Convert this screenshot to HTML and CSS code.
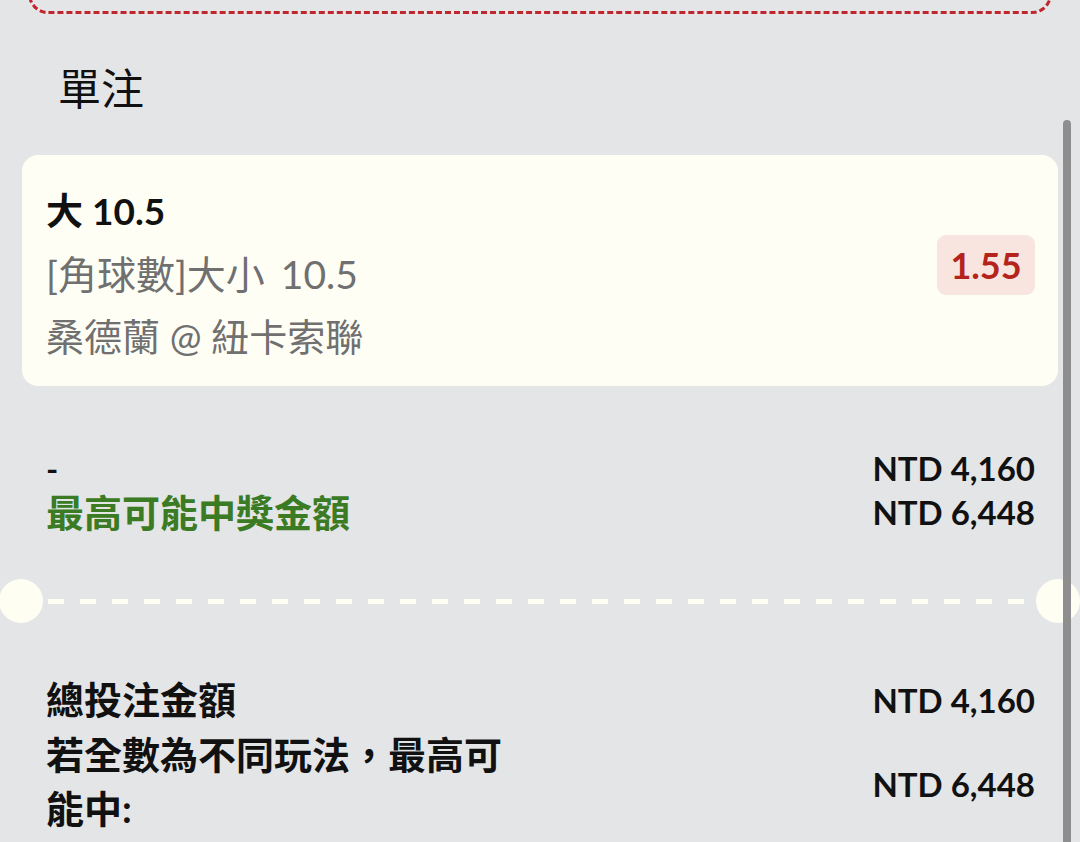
FILE: index.html
```html
<!DOCTYPE html>
<html lang="zh-Hant">
<head>
<meta charset="utf-8">
<title>單注</title>
<link rel="stylesheet" href="styles.css">
</head>
<body>
<div class="page">
  <div class="prev-box"></div>
  <div class="section-title">單注</div>

  <div class="bet-card">
    <div class="bet-info">
      <div class="bet-pick">大 10.5</div>
      <div class="bet-market">[角球數]大小 10.5</div>
      <div class="bet-match">桑德蘭 @ 紐卡索聯</div>
    </div>
    <div class="odds-badge">1.55</div>
  </div>

  <div class="summary">
    <div class="summary-left">
      <div class="line">-</div>
      <div class="line green">最高可能中獎金額</div>
    </div>
    <div class="summary-right">
      <div class="line">NTD 4,160</div>
      <div class="line">NTD 6,448</div>
    </div>
  </div>

  <div class="divider">
    <span class="notch"></span>
    <span class="dashes"></span>
    <span class="notch"></span>
  </div>

  <div class="totals">
    <div class="total-row">
      <div class="total-label">總投注金額</div>
      <div class="total-value">NTD 4,160</div>
    </div>
    <div class="total-row total-row-wrap">
      <div class="total-label">若全數為不同玩法，最高可能中:</div>
      <div class="total-value">NTD 6,448</div>
    </div>
  </div>

  <div class="scrollbar"></div>
</div>
</body>
</html>
```

FILE: styles.css
```css
html, body {
  margin: 0;
  padding: 0;
  background: #e4e5e7;
}

.page {
  position: relative;
  width: 1080px;
  height: 842px;
  overflow: hidden;
  font-family: "Lato", "Noto Sans CJK TC", sans-serif;
  color: #111;
}

.prev-box {
  margin: -42px 28px 0;
  height: 50px;
  border: 3px dashed #c0262d;
  border-radius: 20px;
}

.section-title {
  margin: 46px 0 0 58px;
  height: 58px;
  line-height: 58px;
  font-size: 43px;
  font-weight: 400;
  color: #111;
}

.bet-card {
  margin: 37px 22px 0;
  background: #fffef5;
  border-radius: 16px;
  padding: 26px 23px 19px 24px;
  display: flex;
  align-items: center;
  justify-content: space-between;
}

.bet-info {
  display: flex;
  flex-direction: column;
}

.bet-pick {
  font-size: 37px;
  font-weight: 700;
  line-height: 60px;
  margin-top: 0;
  margin-bottom: 2px;
  color: #111;
}

.bet-market,
.bet-match {
  font-size: 38px;
  font-weight: 400;
  line-height: 62px;
  color: #707070;
}

.bet-market {
  font-size: 39px;
  word-spacing: 6px;
}

.odds-badge {
  width: 98px;
  height: 60px;
  box-sizing: border-box;
  background: #f8e5df;
  border-radius: 9px;
  display: flex;
  align-items: center;
  justify-content: center;
  font-size: 36px;
  font-weight: 700;
  color: #b5231d;
  margin-top: -18px;
}

.summary {
  margin: 60px 45px 0 46px;
  display: flex;
  justify-content: space-between;
}

.summary .line {
  height: 44px;
  line-height: 44px;
  font-size: 33px;
  font-weight: 700;
}

.summary-right {
  text-align: right;
}

.summary .green {
  font-size: 38px;
  color: #3b7b23;
}

.divider {
  margin-top: 45px;
  display: flex;
  align-items: center;
  height: 44px;
}

.notch {
  width: 44px;
  height: 44px;
  border-radius: 50%;
  background: #fffef3;
  flex: none;
}

.notch:first-child {
  margin-left: -1px;
}

.notch:last-child {
  margin-left: auto;
}

.dashes {
  flex: 1;
  height: 5px;
  margin: 0 6px 0 5px;
  background: repeating-linear-gradient(to right, #fffef3 0 16px, transparent 16px 32px);
}

.totals {
  margin: 50px 45px 0 46px;
  display: flex;
  flex-direction: column;
  gap: 1px;
}

.total-row {
  display: flex;
  justify-content: space-between;
  align-items: center;
}

.total-label {
  max-width: 480px;
  font-size: 38px;
  font-weight: 700;
  line-height: 53px;
}

.total-value {
  font-size: 33px;
  font-weight: 700;
  line-height: 44px;
}

.total-row-wrap .total-label {
  line-height: 54px;
}

.total-row-wrap .total-value {
  padding-top: 6px;
}

.scrollbar {
  position: absolute;
  top: 120px;
  right: 9px;
  width: 8px;
  bottom: -10px;
  background: #8e8e8e;
  border-radius: 4px;
}
```
